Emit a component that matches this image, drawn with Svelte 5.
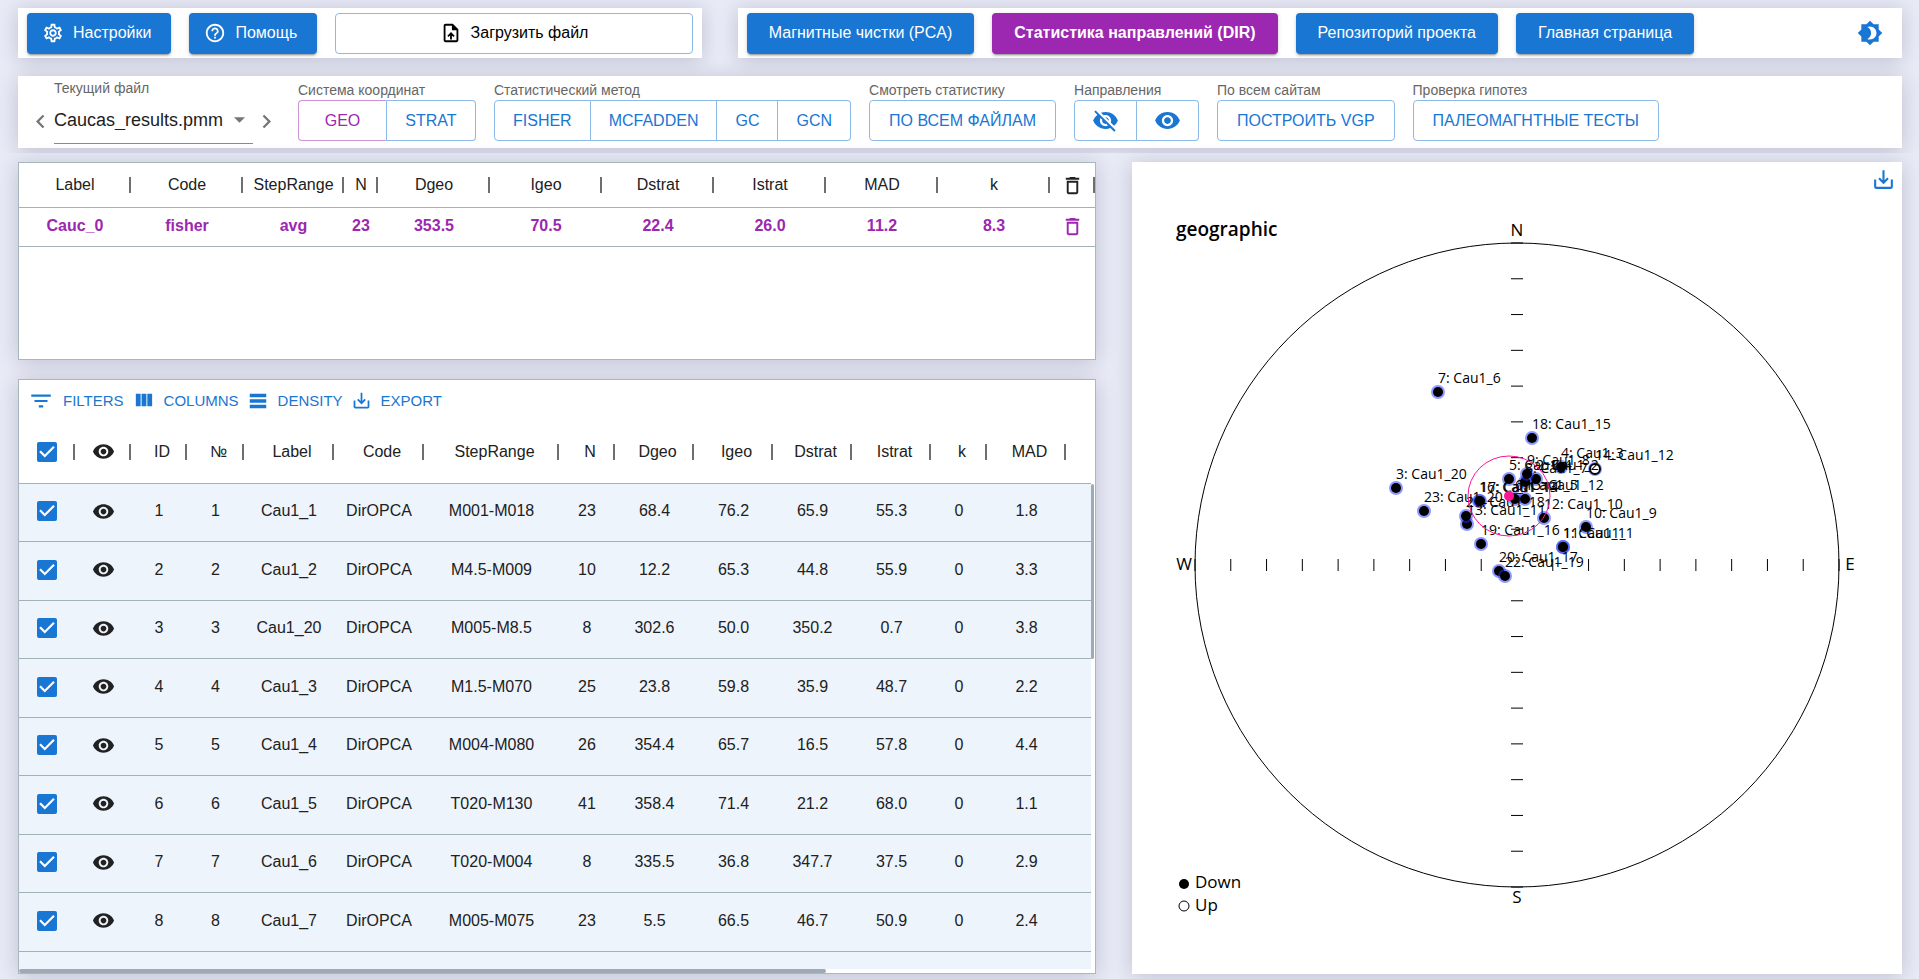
<script>
  const icons = {
    gear: 'M19.43 12.98c.04-.32.07-.64.07-.98 0-.34-.03-.66-.07-.98l2.11-1.65c.19-.15.24-.42.12-.64l-2-3.46c-.09-.16-.26-.25-.44-.25-.06 0-.12.01-.17.03l-2.49 1c-.52-.4-1.08-.73-1.69-.98l-.38-2.65C14.46 2.18 14.25 2 14 2h-4c-.25 0-.46.18-.49.42l-.38 2.65c-.61.25-1.17.59-1.69.98l-2.49-1c-.06-.02-.12-.03-.18-.03-.17 0-.34.09-.43.25l-2 3.46c-.13.22-.07.49.12.64l2.11 1.65c-.04.32-.07.65-.07.98 0 .33.03.66.07.98l-2.11 1.65c-.19.15-.24.42-.12.64l2 3.46c.09.16.26.25.44.25.06 0 .12-.01.17-.03l2.49-1c.52.4 1.08.73 1.69.98l.38 2.65c.03.24.24.42.49.42h4c.25 0 .46-.18.49-.42l.38-2.65c.61-.25 1.17-.59 1.69-.98l2.49 1c.06.02.12.03.18.03.17 0 .34-.09.43-.25l2-3.46c.12-.22.07-.49-.12-.64l-2.11-1.65zm-1.98-1.71c.04.31.05.52.05.73 0 .21-.02.43-.05.73l-.14 1.13.89.7 1.08.84-.7 1.21-1.27-.51-1.04-.42-.9.68c-.43.32-.84.56-1.25.73l-1.06.43-.16 1.13-.2 1.35h-1.4l-.19-1.35-.16-1.13-1.06-.43c-.43-.18-.83-.41-1.23-.71l-.91-.7-1.06.43-1.27.51-.7-1.21 1.08-.84.89-.7-.14-1.13c-.03-.31-.05-.54-.05-.74s.02-.43.05-.73l.14-1.13-.89-.7-1.08-.84.7-1.21 1.27.51 1.04.42.9-.68c.43-.32.84-.56 1.25-.73l1.06-.43.16-1.13.2-1.35h1.39l.19 1.35.16 1.13 1.06.43c.43.18.83.41 1.23.71l.91.7 1.06-.43 1.27-.51.7 1.21-1.07.85-.89.7.14 1.13zM12 8c-2.21 0-4 1.79-4 4s1.79 4 4 4 4-1.79 4-4-1.79-4-4-4zm0 6c-1.1 0-2-.9-2-2s.9-2 2-2 2 .9 2 2-.9 2-2 2z',
    help: 'M11 18h2v-2h-2v2zm1-16C6.48 2 2 6.48 2 12s4.48 10 10 10 10-4.48 10-10S17.52 2 12 2zm0 18c-4.41 0-8-3.59-8-8s3.59-8 8-8 8 3.59 8 8-3.59 8-8 8zm0-14c-2.21 0-4 1.79-4 4h2c0-1.1.9-2 2-2s2 .9 2 2c0 2-3 1.75-3 5h2c0-2.25 3-2.5 3-5 0-2.21-1.79-4-4-4z',
    upload: 'M14 2H6c-1.1 0-1.99.9-1.99 2L4 20c0 1.1.89 2 1.99 2H18c1.1 0 2-.9 2-2V8l-6-6zm4 18H6V4h7v5h5v11zM8 15.01l1.41 1.41L11 14.84V19h2v-4.16l1.59 1.59L16 15.01 12.01 11 8 15.01z',
    theme: 'M20 8.69V4h-4.69L12 .69 8.69 4H4v4.69L.69 12 4 15.31V20h4.69L12 23.31 15.31 20H20v-4.69L23.31 12 20 8.69zM12 18c-.89 0-1.74-.2-2.5-.55C11.56 16.5 13 14.42 13 12s-1.44-4.5-3.5-5.45C10.26 6.2 11.11 6 12 6c3.31 0 6 2.69 6 6s-2.69 6-6 6z',
    prev: 'M15.41 16.59 10.83 12l4.58-4.59L14 6l-6 6 6 6 1.41-1.41z',
    next: 'M8.59 16.59 13.17 12 8.59 7.41 10 6l6 6-6 6-1.41-1.41z',
    eye: 'M12 4.5C7 4.5 2.73 7.61 1 12c1.73 4.39 6 7.5 11 7.5s9.27-3.11 11-7.5c-1.73-4.39-6-7.5-11-7.5zM12 17c-2.76 0-5-2.24-5-5s2.24-5 5-5 5 2.24 5 5-2.24 5-5 5zm0-8c-1.66 0-3 1.34-3 3s1.34 3 3 3 3-1.34 3-3-1.34-3-3-3z',
    eyeOff: 'M12 7c2.76 0 5 2.24 5 5 0 .65-.13 1.26-.36 1.83l2.92 2.92c1.51-1.26 2.7-2.89 3.43-4.75-1.73-4.39-6-7.5-11-7.5-1.4 0-2.74.25-3.98.7l2.16 2.16C10.74 7.13 11.35 7 12 7zM2 4.27l2.28 2.28.46.46C3.08 8.3 1.78 10.02 1 12c1.73 4.39 6 7.5 11 7.5 1.55 0 3.03-.3 4.38-.84l.42.42L19.73 22 21 20.73 3.27 3 2 4.27zM7.53 9.8l1.55 1.55c-.05.21-.08.43-.08.65 0 1.66 1.34 3 3 3 .22 0 .44-.03.65-.08l1.55 1.55c-.67.33-1.41.53-2.2.53-2.76 0-5-2.24-5-5 0-.79.2-1.53.53-2.2zm4.31-.78 3.15 3.15.02-.16c0-1.66-1.34-3-3-3l-.17.01z',
    trash: 'M6 19c0 1.1.9 2 2 2h8c1.1 0 2-.9 2-2V7H6v12zM8 9h8v10H8V9zm7.5-5-1-1h-5l-1 1H5v2h14V4h-3.5z',
    filter: 'M10 18h4v-2h-4v2zM3 6v2h18V6H3zm3 7h12v-2H6v2z',
    columns: 'M10 18h5V5h-5v13zm-6 0h5V5H4v13zM16 5v13h5V5h-5z',
    density: 'M21 8H3V4h18v4zm0 2H3v4h18v-4zm0 6H3v4h18v-4z',
    save: 'M19 12v7H5v-7H3v7c0 1.1.9 2 2 2h14c1.1 0 2-.9 2-2v-7h-2zm-6 .67 2.59-2.58L17 11.5l-5 5-5-5 1.41-1.41L11 12.67V3h2z'
  };

  const navLinks = [
    { text: 'Магнитные чистки (PCA)', active: false },
    { text: 'Статистика направлений (DIR)', active: true },
    { text: 'Репозиторий проекта', active: false },
    { text: 'Главная страница', active: false }
  ];

  const groups = [
    { label: 'Система координат', wide: true, items: [{ text: 'GEO', active: true }, { text: 'STRAT' }] },
    { label: 'Статистический метод', items: [{ text: 'FISHER' }, { text: 'MCFADDEN' }, { text: 'GC' }, { text: 'GCN' }] },
    { label: 'Смотреть статистику', items: [{ text: 'ПО ВСЕМ ФАЙЛАМ' }] },
    { label: 'Направления', items: [{ icon: 'eyeOff', title: 'Скрыть' }, { icon: 'eye', title: 'Показать' }] },
    { label: 'По всем сайтам', items: [{ text: 'ПОСТРОИТЬ VGP' }] },
    { label: 'Проверка гипотез', items: [{ text: 'ПАЛЕОМАГНТНЫЕ ТЕСТЫ' }] }
  ];

  const gridTools = [
    ['filter', 'FILTERS', 26],
    ['columns', 'COLUMNS', 23],
    ['density', 'DENSITY', 22],
    ['save', 'EXPORT', 21]
  ];

  const meanHead = ['Label', 'Code', 'StepRange', 'N', 'Dgeo', 'Igeo', 'Dstrat', 'Istrat', 'MAD', 'k'];
  const meanRow = ['Cauc_0', 'fisher', 'avg', '23', '353.5', '70.5', '22.4', '26.0', '11.2', '8.3'];

  const dirHead = ['ID', '№', 'Label', 'Code', 'StepRange', 'N', 'Dgeo', 'Igeo', 'Dstrat', 'Istrat', 'k', 'MAD'];
  const dirWidths = [56, 56, 56, 57, 90, 90, 135, 56, 79, 79, 79, 79, 56, 79];
  const dirRows = [
    ['1', '1', 'Cau1_1', 'DirOPCA', 'M001-M018', '23', '68.4', '76.2', '65.9', '55.3', '0', '1.8'],
    ['2', '2', 'Cau1_2', 'DirOPCA', 'M4.5-M009', '10', '12.2', '65.3', '44.8', '55.9', '0', '3.3'],
    ['3', '3', 'Cau1_20', 'DirOPCA', 'M005-M8.5', '8', '302.6', '50.0', '350.2', '0.7', '0', '3.8'],
    ['4', '4', 'Cau1_3', 'DirOPCA', 'M1.5-M070', '25', '23.8', '59.8', '35.9', '48.7', '0', '2.2'],
    ['5', '5', 'Cau1_4', 'DirOPCA', 'M004-M080', '26', '354.4', '65.7', '16.5', '57.8', '0', '4.4'],
    ['6', '6', 'Cau1_5', 'DirOPCA', 'T020-M130', '41', '358.4', '71.4', '21.2', '68.0', '0', '1.1'],
    ['7', '7', 'Cau1_6', 'DirOPCA', 'T020-M004', '8', '335.5', '36.8', '347.7', '37.5', '0', '2.9'],
    ['8', '8', 'Cau1_7', 'DirOPCA', 'M005-M075', '23', '5.5', '66.5', '46.7', '50.9', '0', '2.4']
  ];

  // Stereonet geometry, in viewBox units
  const cx = 385;
  const cy = 403;
  const radius = 322;
  const ticks = Array.from({ length: 19 }, (_, i) => ((i - 9) * radius) / 9).filter((d) => d !== 0);

  const points = [
    { id: 1, label: 'Cau1_1', x: 431, y: 385 },
    { id: 2, label: 'Cau1_2', x: 404, y: 317 },
    { id: 3, label: 'Cau1_20', x: 264, y: 326 },
    { id: 4, label: 'Cau1_3', x: 429, y: 305 },
    { id: 5, label: 'Cau1_4', x: 377, y: 317 },
    { id: 6, label: 'Cau1_5', x: 383, y: 337 },
    { id: 7, label: 'Cau1_6', x: 306, y: 230 },
    { id: 8, label: 'Cau1_7', x: 393, y: 320 },
    { id: 9, label: 'Cau1_8', x: 395, y: 312 },
    { id: 10, label: 'Cau1_9', x: 454, y: 365 },
    { id: 11, label: 'Cau1_1', x: 431, y: 385 },
    { id: 12, label: 'Cau1_10', x: 412, y: 356 },
    { id: 13, label: 'Cau1_11', x: 335, y: 362 },
    { id: 14, label: 'Cau1_12', x: 463, y: 307, up: true },
    { id: 15, label: 'Cau1_12', x: 393, y: 337 },
    { id: 16, label: 'Cau1_13', x: 347, y: 339 },
    { id: 17, label: 'Cau1_14', x: 348, y: 339 },
    { id: 18, label: 'Cau1_15', x: 400, y: 276 },
    { id: 19, label: 'Cau1_16', x: 349, y: 382 },
    { id: 20, label: 'Cau1_17', x: 367, y: 409 },
    { id: 21, label: 'Cau1_18', x: 334, y: 354 },
    { id: 22, label: 'Cau1_19', x: 373, y: 414 },
    { id: 23, label: 'Cau1_20', x: 292, y: 349 }
  ];
</script>

{#snippet icon(name, size)}
  <svg class="icon" width={size} height={size} viewBox="0 0 24 24" aria-hidden="true"><path d={icons[name]} /></svg>
{/snippet}

<div class="page">
  <header class="top">
    <div class="panel bar">
      <button class="btn solid">{@render icon('gear', 22)}Настройки</button>
      <button class="btn solid">{@render icon('help', 22)}Помощь</button>
      <button class="btn file">{@render icon('upload', 22)}Загрузить файл</button>
    </div>
    <nav class="panel bar">
      {#each navLinks as link}
        <a class="btn solid" class:active={link.active} href="#top">{link.text}</a>
      {/each}
      <button class="iconbtn theme" aria-label="Тема">{@render icon('theme', 26)}</button>
    </nav>
  </header>

  <section class="panel tools">
    <div class="current">
      <button class="iconbtn step" aria-label="Предыдущий файл">{@render icon('prev', 27)}</button>
      <div class="field">
        <label for="file">Текущий файл</label>
        <select id="file"><option>Caucas_results.pmm</option></select>
      </div>
      <button class="iconbtn step" aria-label="Следующий файл">{@render icon('next', 27)}</button>
    </div>
    {#each groups as group}
      <div class="group">
        <span class="caption">{group.label}</span>
        <div class="buttons" class:wide={group.wide} role="group" aria-label={group.label}>
          {#each group.items as item}
            <button class="btn outline" class:active={item.active} class:glyph={item.icon} aria-label={item.title}>
              {#if item.icon}{@render icon(item.icon, 27)}{:else}{item.text}{/if}
            </button>
          {/each}
        </div>
      </div>
    {/each}
  </section>

  <main>
    <div class="tables">
      <section class="panel framed means">
        <table class="mean">
          <colgroup>
            {#each meanHead as h}
              <col class={h === 'StepRange' ? 'range' : h === 'N' ? 'count' : ''} />
            {/each}
            <col class="del" />
          </colgroup>
          <thead>
            <tr>
              {#each meanHead as h}<th>{h}</th>{/each}
              <th>{@render icon('trash', 23)}</th>
            </tr>
          </thead>
          <tbody>
            <tr>
              {#each meanRow as c}<td>{c}</td>{/each}
              <td><button class="iconbtn del" aria-label="Удалить">{@render icon('trash', 23)}</button></td>
            </tr>
          </tbody>
        </table>
      </section>

      <section class="panel framed dirs">
        <div class="gridtools">
          {#each gridTools as [name, text, size]}
            <button>{@render icon(name, size)}<span>{text}</span></button>
          {/each}
        </div>
        <div class="viewport">
          <table class="dir">
            <colgroup>
              {#each dirWidths as w}<col style="width: {w}px" />{/each}
              <col />
            </colgroup>
            <thead>
              <tr>
                <th><input type="checkbox" checked aria-label="Все строки" /></th>
                <th>{@render icon('eye', 23)}</th>
                {#each dirHead as h}<th class="named">{h}</th>{/each}
                <td></td>
              </tr>
            </thead>
            <tbody>
              {#each dirRows as row}
                <tr>
                  <td><input type="checkbox" checked aria-label="Строка {row[0]}" /></td>
                  <td><button class="iconbtn see" aria-label="Видимость {row[0]}">{@render icon('eye', 23)}</button></td>
                  {#each row as c}<td>{c}</td>{/each}
                  <td></td>
                </tr>
              {/each}
              <tr class="rest"><td colspan="15"></td></tr>
            </tbody>
          </table>
          <div class="vbar"></div>
        </div>
        <div class="hbar"><div class="thumb"></div></div>
      </section>
    </div>

    <section class="panel graph">
      <button class="iconbtn export" aria-label="Скачать график">{@render icon('save', 25)}</button>
      <svg class="net" viewBox="0 0 770 812" role="img" aria-label="geographic">
        <g class="axes">
          <circle cx={cx} cy={cy} r={radius} />
          {#each ticks as d}
            <path d="M{cx - 6} {cy + d}h12M{cx + d} {cy - 6}v12" />
          {/each}
        </g>
        <g class="names">
          <text class="title" x="44" y="74">geographic</text>
          <text x="385" y="74" text-anchor="middle">N</text>
          <text x="385" y="741" text-anchor="middle">S</text>
          <text x="52" y="408" text-anchor="middle">W</text>
          <text x="718" y="408" text-anchor="middle">E</text>
          <circle cx="52" cy="722" r="5" />
          <circle class="open" cx="52" cy="744" r="5" />
          <text x="63" y="726">Down</text>
          <text x="63" y="749">Up</text>
        </g>
        <g class="points">
          {#each points as p}
            <circle class="halo" cx={p.x} cy={p.y} r="7" />
            <circle class:open={p.up} cx={p.x} cy={p.y} r="5" />
          {/each}
        </g>
        <g class="labels">
          {#each points as p}
            <text x={p.x} y={p.y - 9}>{p.id}: {p.label}</text>
          {/each}
        </g>
        <g class="mean-dir">
          <circle cx="377" cy="334" r="5" />
          <ellipse cx="377" cy="334" rx="41" ry="40" />
        </g>
      </svg>
    </section>
  </main>
</div>

<style>
  :global(body) {
    margin: 0;
    background: #e8eaf6;
  }
  * {
    box-sizing: border-box;
  }
  .page {
    display: flex;
    flex-direction: column;
    height: 100vh;
    min-height: 700px;
    padding: 8px 0 5px;
    overflow: hidden;
    font-family: 'Liberation Sans', Arial, sans-serif;
    font-size: 16px;
    color: #212121;
  }
  button,
  select {
    font: inherit;
    border: 0;
    background: none;
    padding: 0;
    cursor: pointer;
  }
  .icon {
    display: block;
    flex: none;
    fill: currentColor;
  }
  .panel {
    background: #fff;
    box-shadow: 0 2px 20px rgba(0, 0, 50, 0.18);
  }
  .top {
    display: grid;
    grid-template-columns: 37fr 63fr;
    gap: 36px;
    margin: 0 17px 18px 18px;
  }
  .bar {
    display: flex;
    align-items: center;
    gap: 18px;
    height: 50px;
    padding: 0 9px;
  }
  .btn {
    display: flex;
    align-items: center;
    justify-content: center;
    gap: 9px;
    height: 41px;
    padding: 0 22px;
    border-radius: 4px;
    white-space: nowrap;
    text-decoration: none;
  }
  .solid {
    background: #1976d2;
    color: #fff;
    box-shadow: 0 3px 1px -2px rgba(0, 0, 0, 0.2), 0 2px 2px rgba(0, 0, 0, 0.14), 0 1px 5px rgba(0, 0, 0, 0.12);
  }
  button.solid {
    padding: 0 20px 0 15px;
  }
  .solid.active {
    background: #9c27b0;
    font-weight: 700;
  }
  .file {
    flex: 1;
    border: 1px solid #8cbae8;
    color: #000;
  }
  .iconbtn {
    display: flex;
    align-items: center;
    justify-content: center;
    color: #1976d2;
  }
  .theme {
    margin: 0 10px 0 auto;
  }
  .tools {
    display: flex;
    gap: 18px;
    height: 72px;
    flex: none;
    margin: 0 17px 0 18px;
    padding: 4px 18px 0 9px;
  }
  .current {
    display: flex;
  }
  .step {
    width: 27px;
    color: #757575;
    padding-top: 14px;
  }
  .field {
    width: 199px;
    height: 64px;
    border-bottom: 1px solid #8a8a8a;
  }
  .field label,
  .caption {
    display: block;
    font-size: 14px;
    line-height: 16px;
    color: #666;
    white-space: nowrap;
  }
  select {
    appearance: none;
    width: 100%;
    height: 47px;
    font-size: 18px;
    color: #212121;
    background: url("data:image/svg+xml,%3Csvg xmlns='http://www.w3.org/2000/svg' viewBox='0 0 12 6'%3E%3Cpath d='M0 0h12L6 6z' fill='%23757575'/%3E%3C/svg%3E") right 8px center / 11px 6px no-repeat;
  }
  .caption {
    margin: 2px 0;
  }
  .buttons {
    display: flex;
    width: max-content;
  }
  .outline {
    color: #1976d2;
    border: 1px solid #8cbae8;
    border-radius: 0;
    padding: 0 18px;
    background: #fff;
  }
  .outline:only-child {
    padding: 0 19px;
  }
  .outline.glyph {
    padding: 0 17px;
  }
  .outline + .outline {
    border-left: 0;
  }
  .outline:first-child {
    border-top-left-radius: 4px;
    border-bottom-left-radius: 4px;
  }
  .outline:last-child {
    border-top-right-radius: 4px;
    border-bottom-right-radius: 4px;
  }
  .outline.active {
    color: #9c27b0;
    border-color: #cd93d7;
    border-right-color: #8cbae8;
  }
  .wide .outline {
    min-width: 89px;
    padding: 0 17px;
  }
  main {
    position: relative;
    display: grid;
    grid-template-columns: 7fr 5fr;
    gap: 36px;
    flex: 1;
    min-height: 0;
    margin-top: 5px;
    padding: 9px 17px 0 18px;
    background: #e8eaf6;
  }
  .tables {
    display: flex;
    flex-direction: column;
    gap: 19px;
    min-width: 0;
    min-height: 0;
  }
  .framed {
    border: 1px solid #a9b6bd;
    overflow: hidden;
    min-height: 0;
  }
  .means {
    flex: 33 1 0;
  }
  .dirs {
    flex: 100 1 0;
    display: flex;
    flex-direction: column;
  }
  table {
    width: 100%;
    table-layout: fixed;
    border-collapse: separate;
    border-spacing: 0;
    text-align: center;
  }
  th,
  td {
    padding: 0;
    border-bottom: 1px solid #a3b1b8;
    vertical-align: middle;
    white-space: nowrap;
  }
  th {
    font-weight: 400;
    background: linear-gradient(#6e6e6e, #6e6e6e) right center / 2px 16px no-repeat;
  }
  th .icon,
  .see,
  .del {
    margin: 0 auto;
  }
  .mean col.range {
    width: 101px;
  }
  .mean col.count {
    width: 34px;
  }
  .mean col.del {
    width: 45px;
  }
  .mean th {
    height: 45px;
  }
  .mean td {
    height: 39px;
    padding-bottom: 2px;
    font-weight: 700;
    color: #9c27b0;
  }
  .iconbtn.del {
    color: #9c27b0;
  }
  .gridtools {
    display: flex;
    flex: none;
    gap: 8px;
    height: 41px;
    padding: 1px 9px 0;
  }
  .gridtools button {
    display: flex;
    align-items: center;
    gap: 9px;
    font-size: 15px;
    color: #1976d2;
  }
  .viewport {
    display: flex;
    flex: 1;
    min-height: 0;
    overflow: hidden;
  }
  .dir {
    flex: 1;
    align-self: flex-start;
  }
  .dir th,
  .dir thead td {
    height: 63px;
  }
  .dir th.named {
    padding-left: 6px;
  }
  .dir tbody td {
    height: 58px;
    padding-bottom: 2px;
    background: #edf4fc;
  }
  .dir tbody tr:nth-child(even) td {
    height: 59px;
  }
  .see {
    color: #212121;
  }
  input {
    appearance: none;
    display: block;
    width: 20px;
    height: 20px;
    margin: 0 auto;
    border-radius: 2px;
    background: #1976d2 url("data:image/svg+xml,%3Csvg xmlns='http://www.w3.org/2000/svg' viewBox='3 3 18 18'%3E%3Cpath d='M10 17l-5-5 1.41-1.41L10 14.17l7.59-7.59L19 8z' fill='%23fff'/%3E%3C/svg%3E") center / 20px 20px;
  }
  .vbar {
    width: 3px;
    height: 175px;
    margin: 63px 1px 0 0;
    border-radius: 2px;
    background: #9eabb2;
  }
  .hbar {
    flex: none;
    height: 4px;
  }
  .thumb {
    width: 75%;
    height: 4px;
    border-radius: 2px;
    background: #9eabb2;
  }
  .graph {
    position: relative;
    min-width: 0;
    min-height: 0;
  }
  .export {
    position: absolute;
    top: 5px;
    right: 6px;
  }
  .net {
    display: block;
    width: 100%;
    height: 100%;
    font-family: 'Open Sans', 'Noto Sans', sans-serif;
  }
  .axes circle,
  .axes path {
    fill: none;
    stroke: #000;
  }
  .names {
    font-size: 17px;
  }
  .title {
    font-size: 19px;
    font-weight: 600;
  }
  .open {
    fill: #fff;
    stroke: #000;
  }
  .points .open {
    stroke-width: 2;
  }
  .halo {
    fill: #1e32ff;
    fill-opacity: 0.5;
  }
  .labels {
    font-size: 14px;
  }
  .mean-dir circle {
    fill: #ff1493;
  }
  .mean-dir ellipse {
    fill: none;
    stroke: #ff1493;
  }
</style>
